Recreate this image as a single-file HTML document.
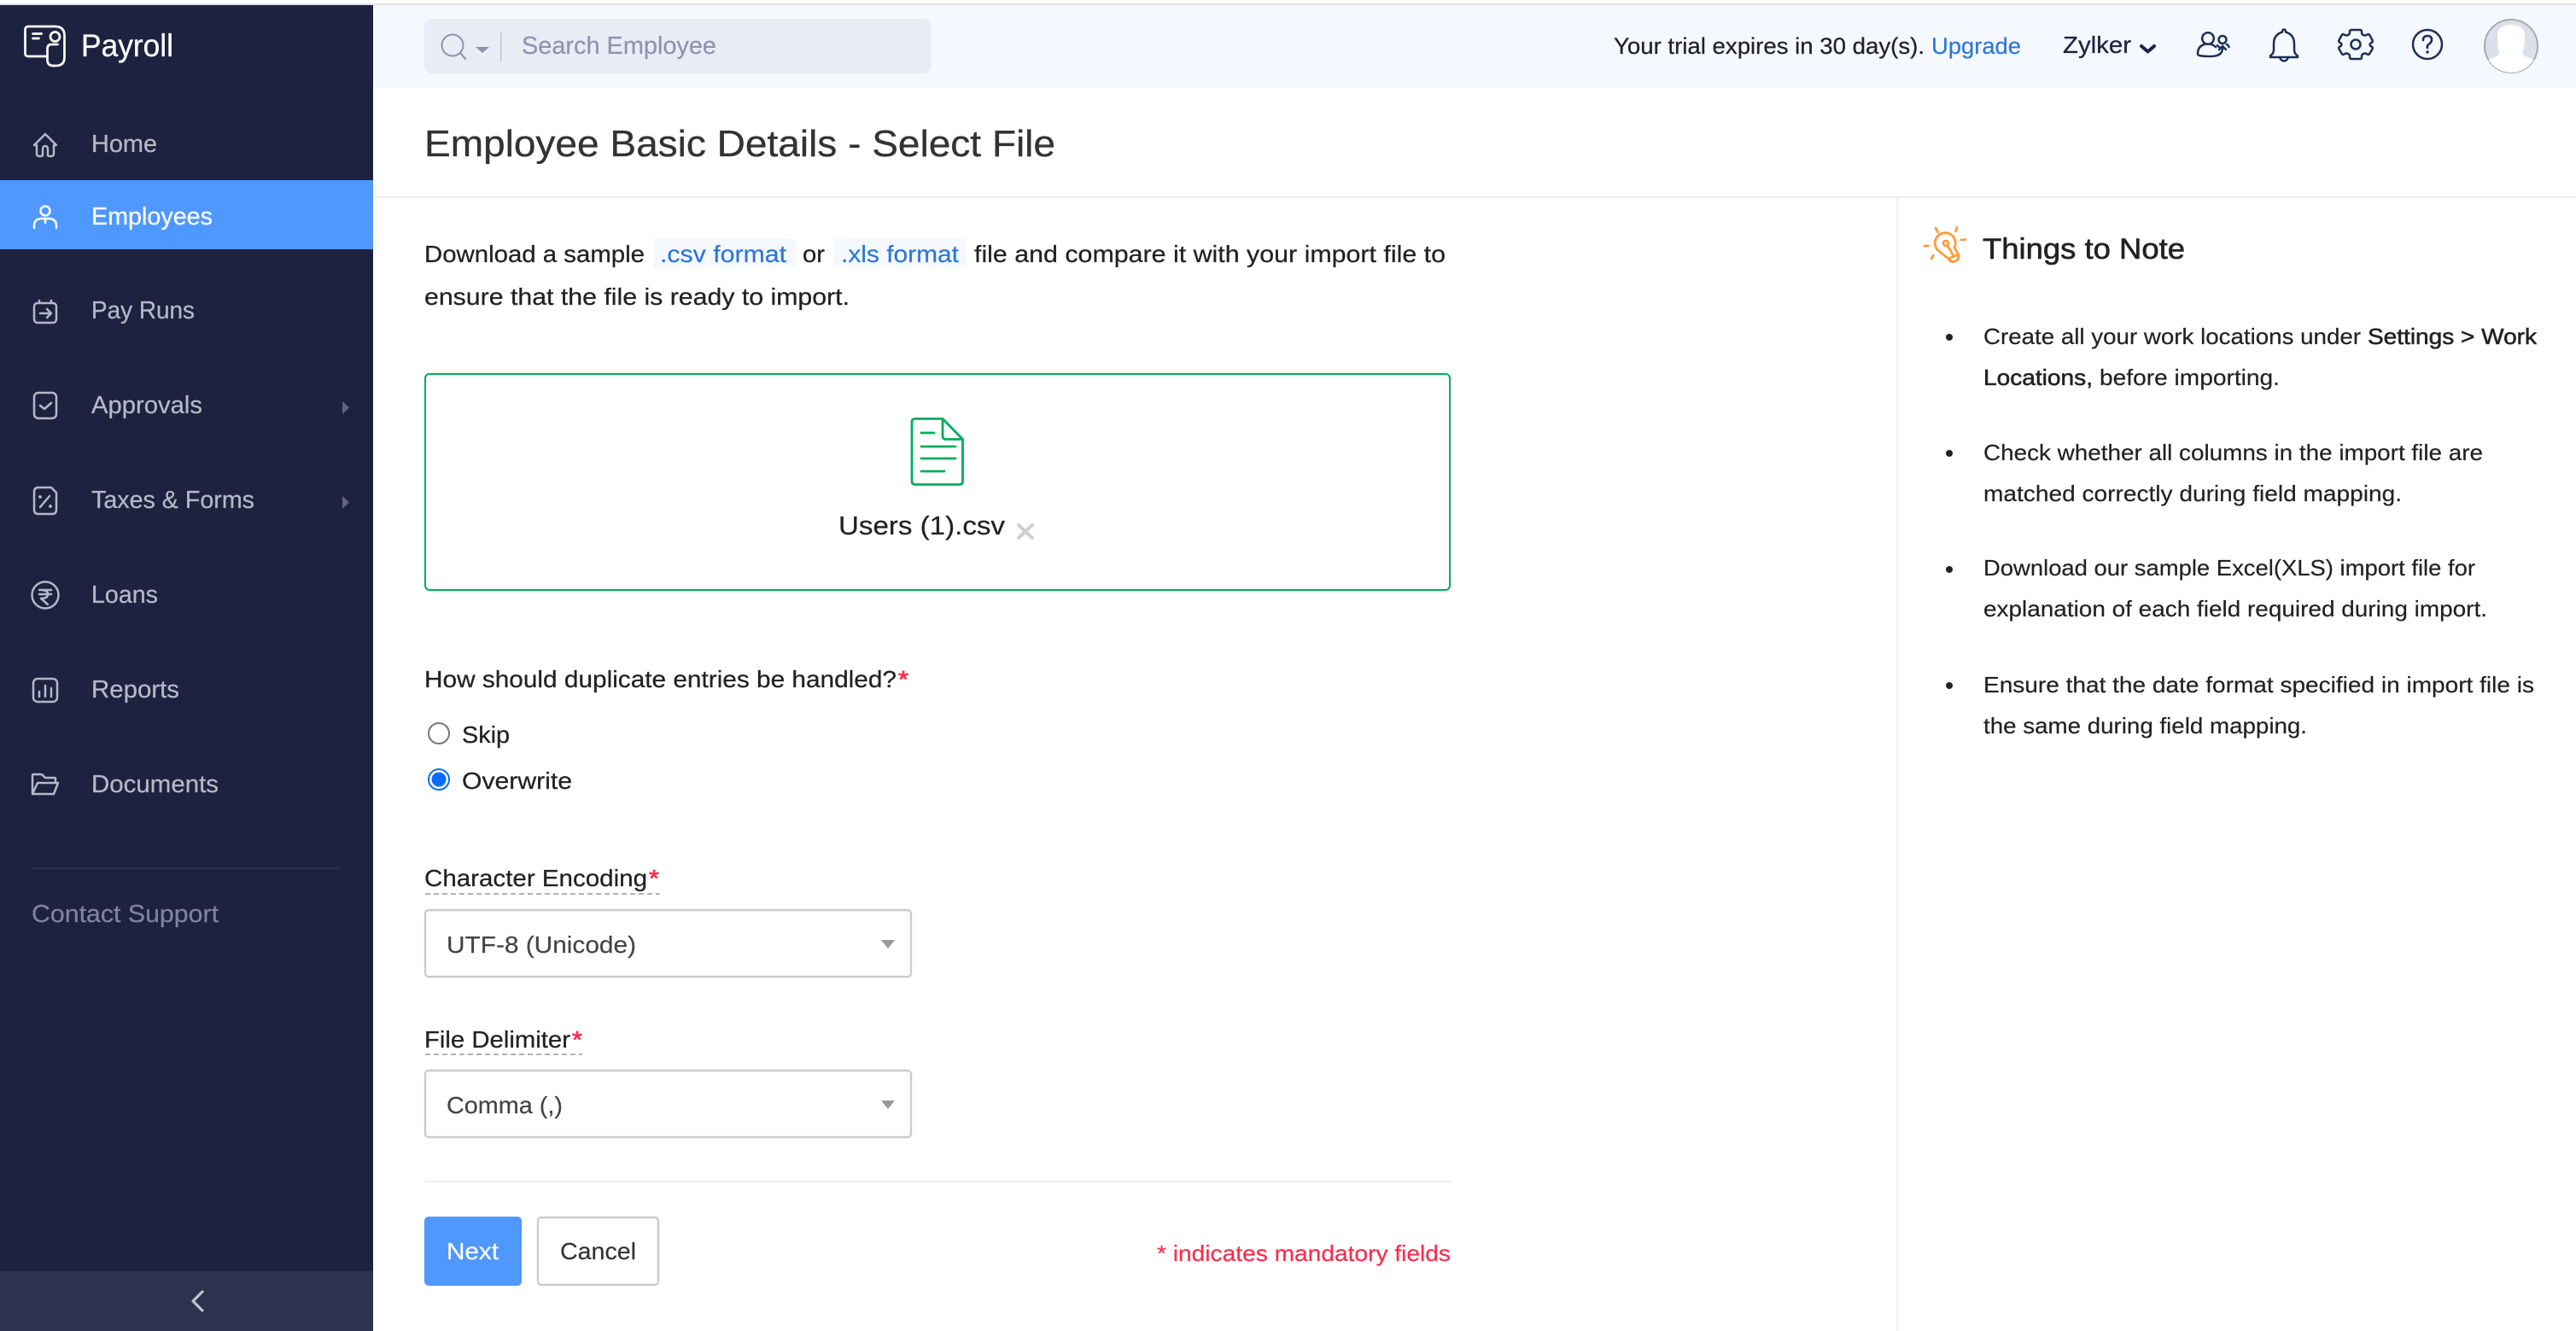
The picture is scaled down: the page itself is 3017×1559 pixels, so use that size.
<!DOCTYPE html>
<html lang="en">
<head>
<meta charset="utf-8">
<title>Employee Basic Details - Select File</title>
<style>
html,body{margin:0;padding:0;background:#fff;width:3017px;height:1559px;overflow:hidden}
svg{display:block}
text{font-family:"Liberation Sans",sans-serif}
.n{font-size:29px;fill:#b5b8c6;stroke:#b5b8c6;stroke-width:.25}
.b{font-size:28px;fill:#222;stroke:#222;stroke-width:.25}
.l{font-size:28px;fill:#2a77d8;stroke:#2a77d8;stroke-width:.2}
.r{font-size:26px;fill:#222;stroke:#222;stroke-width:.2}
.rm{font-size:26px;fill:#222;stroke:#222;stroke-width:.55}
.st{fill:#ff2a4d;stroke:#ff2a4d;stroke-width:.7;font-size:28px}
.ic{fill:none;stroke:#b5b8c6;stroke-width:2.5;stroke-linecap:round;stroke-linejoin:round}
.top{fill:none;stroke:#1c2f58;stroke-width:2.5;stroke-linecap:round;stroke-linejoin:round}
</style>
</head>
<body>
<svg xmlns="http://www.w3.org/2000/svg" width="3017" height="1559" viewBox="0 0 3017 1559">
<rect width="3017" height="1559" fill="#fff"/>
<rect y="4" width="3017" height="2" fill="#e0e0e2"/>
<rect x="437" y="6" width="2580" height="96" fill="#f5f8ff"/>
<rect x="437" y="230" width="2580" height="2" fill="#eeeeee"/>
<rect x="2221" y="232" width="2" height="1327" fill="#eeeeee"/>

<!-- sidebar -->
<rect y="6" width="437" height="1553" fill="#1d2240"/>
<rect y="211" width="437" height="81" fill="#4f98ff"/>
<rect y="1489" width="437" height="70" fill="#2b334f"/>
<rect x="37" y="1016" width="360" height="2" fill="#2c3150"/>

<g fill="none" stroke="#fff" stroke-width="2.700" stroke-linecap="round" stroke-linejoin="round">
<path d="M55 66H33q-3.500 0-3.500-3.500V35q0-4 4-4h31q11 0 11 11v25q0 10-10 10h-3q-7 0-7-7V57q0-5 5-5h7"/>
<circle cx="64.500" cy="43" r="5.500"/>
<path d="M38.500 39.500h10M38.500 45h7"/>
</g>
<text x="95" y="66" font-size="37" fill="#fff" stroke="#fff" stroke-width=".3" textLength="108" lengthAdjust="spacingAndGlyphs">Payroll</text>

<!-- nav icons -->
<path class="ic" d="M40 170l13-13 13 13h-3v10q0 3-3 3h-2q-2 0-2-2v-6q0-4-3-4t-3 4v6q0 2-2 2h-2q-3 0-3-3v-10z"/>
<g fill="none" stroke="#fff" stroke-width="2.500" stroke-linecap="round" stroke-linejoin="round">
<circle cx="53" cy="247" r="5.500"/>
<path d="M40 267v-3q0-7 8-8h10q8 1 8 8v3M53 256v5"/>
</g>
<g class="ic">
<rect x="40" y="355" width="26" height="23" rx="4"/><path d="M46 352v3M60 352v3M47 367h12M55 362l5 5-5 5"/>
<rect x="40" y="460" width="26" height="30" rx="5"/><path d="M47 475l5 4 8-7"/>
<path d="M45 571h15l6 6v20q0 5-5 5H45q-5 0-5-5v-21q0-5 5-5z"/><path d="M47 594l11-13"/>
<circle cx="53" cy="697" r="15.500"/><path d="M46 691h14M46 696h14M48 691q8 0 8 5t-8 5l8 7"/>
<rect x="39" y="795" width="28" height="27" rx="5"/><path d="M46 816v-6M53 816v-13M60 816v-10"/>
<path d="M38 930v-22q0-1 1-1h10l4 4h11q1 0 1 1v5M38 930l6-13h24l-5 13z"/>
</g>
<circle cx="47" cy="582" r="1.900" fill="#b5b8c6"/><circle cx="59" cy="593" r="1.900" fill="#b5b8c6"/>

<text class="n" x="107" y="178" textLength="77" lengthAdjust="spacingAndGlyphs">Home</text>
<text class="n" x="107" y="263" style="fill:#fff;stroke:#fff" textLength="142" lengthAdjust="spacingAndGlyphs">Employees</text>
<text class="n" x="107" y="373" textLength="121" lengthAdjust="spacingAndGlyphs">Pay Runs</text>
<text class="n" x="107" y="484" textLength="130" lengthAdjust="spacingAndGlyphs">Approvals</text>
<text class="n" x="107" y="595" textLength="191" lengthAdjust="spacingAndGlyphs">Taxes &amp; Forms</text>
<text class="n" x="107" y="706" textLength="78" lengthAdjust="spacingAndGlyphs">Loans</text>
<text class="n" x="107" y="817" textLength="103" lengthAdjust="spacingAndGlyphs">Reports</text>
<text class="n" x="107" y="928" textLength="149" lengthAdjust="spacingAndGlyphs">Documents</text>
<text x="37" y="1080" font-size="29" fill="#81849e" stroke="#81849e" stroke-width=".2" textLength="219" lengthAdjust="spacingAndGlyphs">Contact Support</text>
<path d="M401 470l8 7.500-8 7.500zM401 581l8 7.500-8 7.500z" fill="#61647c"/>
<path d="M237 1513l-11 11 11 11" fill="none" stroke="#c2c4cc" stroke-width="3.200" stroke-linecap="round" stroke-linejoin="round"/>

<!-- header -->
<rect x="497" y="22" width="594" height="64" rx="9" fill="#e9ecf5"/>
<circle cx="530" cy="53" r="12.500" fill="none" stroke="#8f92af" stroke-width="2"/>
<path d="M539 62l6 7" stroke="#8f92af" stroke-width="2.200" stroke-linecap="round"/>
<path d="M557 55h16l-8 7z" fill="#8f92af"/>
<rect x="586" y="38" width="1.500" height="34" fill="#c2c5d6"/>
<text x="611" y="63" font-size="29" fill="#8f92af" stroke="#8f92af" stroke-width=".2" textLength="228" lengthAdjust="spacingAndGlyphs">Search Employee</text>

<text x="1890" y="63" font-size="27" fill="#222" stroke="#222" stroke-width=".25" textLength="364" lengthAdjust="spacingAndGlyphs">Your trial expires in 30 day(s).</text>
<text x="2262" y="63" font-size="27" fill="#2a77d8" stroke="#2a77d8" stroke-width=".2" textLength="105" lengthAdjust="spacingAndGlyphs">Upgrade</text>
<text x="2416" y="62" font-size="28" fill="#1c2445" stroke="#1c2445" stroke-width=".3" textLength="80" lengthAdjust="spacingAndGlyphs">Zylker</text>
<path d="M2508 54l7.500 6.500 7.500-6.500" fill="none" stroke="#1c2445" stroke-width="4" stroke-linecap="round" stroke-linejoin="round"/>

<g class="top">
<circle cx="2586" cy="45" r="6.800"/>
<path d="M2574 63q0-9 8-11M2590 52q3 1 5 3M2574 63q0 2 4 2.500q14 1.500 20-1q5-2 5-9M2599 58l4-4 4 4"/>
<circle cx="2603" cy="46.500" r="4.500"/>
<path d="M2599 55q-2-1-2-2M2608 52q2 1 2.500 3"/>
<path d="M2675 34.500q-2 0-2 3q-10 3-10 14v7q0 4-4 7v1.500h32v-1.500q-4-3-4-7v-7q0-11-10-14q0-3-2-3zM2670 67.500q2 4 5 4t5-4"/>
<circle cx="2759" cy="52" r="5.500"/>
<path d="M2754 35h10q2 0 2 2v1.500q0 1.500 2 2.500q2 1 3.500 0l1-.5q2-1 3 1l3 5.500q1 2-1 3l-1 .5q-2 1.500 0 3.500l1 .5q2 1 1 3l-3 5q-1 2-3 1l-1-.5q-1.500-1-3.500 0q-2 1-2 2.500V67q0 2-2 2h-10q-2 0-2-2v-1.500q0-1.500-2-2.500q-2-1-3.500 0l-1 .5q-2 1-3-1l-3-5q-1-2 1-3l1-.5q2-2 0-3.500l-1-.5q-2-1-1-3l3-5.500q1-2 3-1l1 .5q1.500 1 3.500 0q2-1 2-2.500V37q0-2 2-2z"/>
<circle cx="2843" cy="52" r="17"/>
<path d="M2838 47q0-5 5-5t5 4.500q0 3-3 5t-2 4.500" stroke-width="2.600"/>
</g>
<circle cx="2843" cy="61" r="1.700" fill="#1c2f58"/>

<defs><clipPath id="av"><circle cx="2941" cy="54" r="31"/></clipPath></defs>
<circle cx="2941" cy="54" r="31" fill="#dde0ea" stroke="#a9a9a9" stroke-width="2"/>
<g clip-path="url(#av)"><path d="M2925 42q0-13 16-13q16 0 16 13q0 12-2 18q-1 4 3 6l14 6v20h-62v-20l14-6q4-2 3-6q-2-6-2-18z" fill="#fff"/></g>

<!-- title -->
<text x="497" y="183" font-size="44" fill="#333" stroke="#333" stroke-width=".3" textLength="739" lengthAdjust="spacingAndGlyphs">Employee Basic Details - Select File</text>

<!-- intro -->
<rect x="765" y="280" width="167" height="33" fill="#f5f8ff"/>
<rect x="976" y="280" width="156" height="33" fill="#f5f8ff"/>
<text class="b" x="497" y="307" textLength="258" lengthAdjust="spacingAndGlyphs">Download a sample</text>
<text class="l" x="773" y="307" textLength="148" lengthAdjust="spacingAndGlyphs">.csv format</text>
<text class="b" x="940" y="307" textLength="26" lengthAdjust="spacingAndGlyphs">or</text>
<text class="l" x="985" y="307" textLength="138" lengthAdjust="spacingAndGlyphs">.xls format</text>
<text class="b" x="1141" y="307" textLength="552" lengthAdjust="spacingAndGlyphs">file and compare it with your import file to</text>
<text class="b" x="497" y="357" textLength="498" lengthAdjust="spacingAndGlyphs">ensure that the file is ready to import.</text>

<!-- upload box -->
<rect x="498" y="438" width="1200" height="253" rx="5" fill="#fff" stroke="#00ae5b" stroke-width="2"/>
<g fill="none" stroke="#00ae5b" stroke-width="2.800" stroke-linecap="round" stroke-linejoin="round">
<path d="M1072 490.500h32l23.500 24v49q0 4-4 4h-51.500q-4 0-4-4v-69q0-4 4-4z"/>
<path d="M1104 490.500v20q0 4 4 4h19.500"/>
<path d="M1079 507h15M1079 523h40M1079 537h40M1079 552h27"/>
</g>
<text x="982" y="626" font-size="31" fill="#222" stroke="#222" stroke-width=".25" textLength="195" lengthAdjust="spacingAndGlyphs">Users (1).csv</text>
<path d="M1193 615l16 15M1209 615l-16 15" stroke="#cfcfcf" stroke-width="4" stroke-linecap="round"/>

<!-- duplicates -->
<text class="b" x="497" y="805" textLength="553" lengthAdjust="spacingAndGlyphs">How should duplicate entries be handled?</text>
<text class="st" x="1052" y="805" textLength="12" lengthAdjust="spacingAndGlyphs">*</text>
<circle cx="514" cy="859" r="12" fill="#fff" stroke="#767676" stroke-width="2"/>
<text class="b" x="541" y="870" textLength="56" lengthAdjust="spacingAndGlyphs">Skip</text>
<circle cx="514" cy="913" r="12" fill="#fff" stroke="#0a6cff" stroke-width="2"/>
<circle cx="514" cy="913" r="8.500" fill="#0a6cff"/>
<text class="b" x="541" y="924" textLength="129" lengthAdjust="spacingAndGlyphs">Overwrite</text>

<!-- encoding -->
<text class="b" x="497" y="1038" textLength="261" lengthAdjust="spacingAndGlyphs">Character Encoding</text>
<text class="st" x="760" y="1038" textLength="12" lengthAdjust="spacingAndGlyphs">*</text>
<path d="M498 1047h274.500" stroke="#999" stroke-width="1.600" stroke-dasharray="6 4"/>
<rect x="498" y="1066" width="569" height="78" rx="4" fill="#fff" stroke="#ccc" stroke-width="2.400"/>
<text x="523" y="1116" font-size="28" fill="#444" stroke="#444" stroke-width=".2" textLength="222" lengthAdjust="spacingAndGlyphs">UTF-8 (Unicode)</text>
<path d="M1032 1101h16l-8 10z" fill="#999"/>

<!-- delimiter -->
<text class="b" x="497" y="1227" textLength="171" lengthAdjust="spacingAndGlyphs">File Delimiter</text>
<text class="st" x="670" y="1227" textLength="12" lengthAdjust="spacingAndGlyphs">*</text>
<path d="M498 1235h184" stroke="#999" stroke-width="1.600" stroke-dasharray="6 4"/>
<rect x="498" y="1254" width="569" height="78" rx="4" fill="#fff" stroke="#ccc" stroke-width="2.400"/>
<text x="523" y="1304" font-size="28" fill="#444" stroke="#444" stroke-width=".2" textLength="136" lengthAdjust="spacingAndGlyphs">Comma (,)</text>
<path d="M1032 1289h16l-8 10z" fill="#999"/>

<rect x="498" y="1383" width="1201" height="2" fill="#f0f0f0"/>

<!-- buttons -->
<rect x="497" y="1425" width="114" height="81" rx="5" fill="#4f98ff"/>
<text x="523" y="1475" font-size="28" fill="#fff" stroke="#fff" stroke-width=".2" textLength="61" lengthAdjust="spacingAndGlyphs">Next</text>
<rect x="630" y="1426" width="141" height="79" rx="4" fill="#fff" stroke="#ccc" stroke-width="2.400"/>
<text x="656" y="1475" font-size="28" fill="#333" stroke="#333" stroke-width=".2" textLength="89" lengthAdjust="spacingAndGlyphs">Cancel</text>
<text x="1355" y="1477" font-size="26" fill="#ff2a4d" stroke="#ff2a4d" stroke-width=".2" textLength="344" lengthAdjust="spacingAndGlyphs">* indicates mandatory fields</text>

<!-- things to note -->
<g fill="none" stroke="#ff9a3e" stroke-width="2.800" stroke-linecap="round" stroke-linejoin="round">
<path d="M2272 295A12 12 0 1 1 2289 290L2293 297Q2296 303 2290 306Q2285 308 2282 303L2272 295z"/>
<path d="M2282 303L2294 298M2281 288L2287 298"/>
<circle cx="2279" cy="285" r="3"/>
<path d="M2267 267l2.500 5M2292 266l-1.500 5M2297 281l5-.5M2254 288h4.500M2262 303l2.500-4"/>
</g>
<text x="2322" y="303" font-size="34" fill="#222" stroke="#222" stroke-width=".6" textLength="237" lengthAdjust="spacingAndGlyphs">Things to Note</text>

<g fill="#222">
<circle cx="2283" cy="395" r="4"/><circle cx="2283" cy="531" r="4"/><circle cx="2283" cy="667" r="4"/><circle cx="2283" cy="803" r="4"/>
</g>
<text class="r" x="2323" y="403" textLength="442" lengthAdjust="spacingAndGlyphs">Create all your work locations under</text>
<text class="rm" x="2773" y="403" textLength="198" lengthAdjust="spacingAndGlyphs">Settings &gt; Work</text>
<text class="rm" x="2323" y="451" textLength="128" lengthAdjust="spacingAndGlyphs">Locations,</text>
<text class="r" x="2459" y="451" textLength="211" lengthAdjust="spacingAndGlyphs">before importing.</text>
<text class="r" x="2323" y="539" textLength="585" lengthAdjust="spacingAndGlyphs">Check whether all columns in the import file are</text>
<text class="r" x="2323" y="587" textLength="490" lengthAdjust="spacingAndGlyphs">matched correctly during field mapping.</text>
<text class="r" x="2323" y="674" textLength="576" lengthAdjust="spacingAndGlyphs">Download our sample Excel(XLS) import file for</text>
<text class="r" x="2323" y="722" textLength="590" lengthAdjust="spacingAndGlyphs">explanation of each field required during import.</text>
<text class="r" x="2323" y="811" textLength="645" lengthAdjust="spacingAndGlyphs">Ensure that the date format specified in import file is</text>
<text class="r" x="2323" y="859" textLength="379" lengthAdjust="spacingAndGlyphs">the same during field mapping.</text>
</svg>
</body>
</html>
